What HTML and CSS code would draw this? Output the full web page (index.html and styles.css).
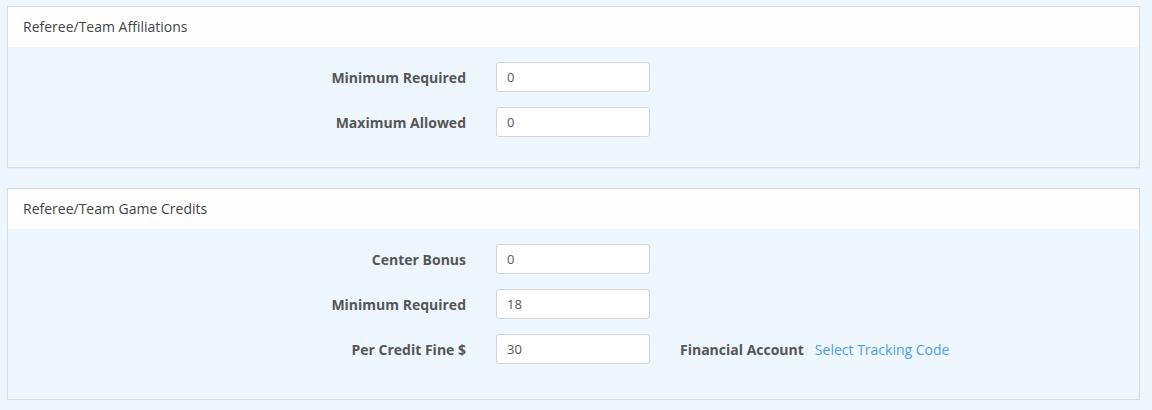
FILE: index.html
```html
<!DOCTYPE html>
<html>
<head>
<meta charset="utf-8">
<link rel="stylesheet" href="styles.css">
</head>
<body>
<div class="page">
  <section class="panel">
    <div class="panel-heading">Referee/Team Affiliations</div>
    <div class="panel-body">
      <div class="form-row">
        <label class="form-label">Minimum Required</label>
        <input class="form-input" type="text" value="0">
      </div>
      <div class="form-row">
        <label class="form-label">Maximum Allowed</label>
        <input class="form-input" type="text" value="0">
      </div>
    </div>
  </section>
  <section class="panel">
    <div class="panel-heading">Referee/Team Game Credits</div>
    <div class="panel-body panel-body-tall">
      <div class="form-row">
        <label class="form-label">Center Bonus</label>
        <input class="form-input" type="text" value="0">
      </div>
      <div class="form-row">
        <label class="form-label">Minimum Required</label>
        <input class="form-input" type="text" value="18">
      </div>
      <div class="form-row">
        <label class="form-label">Per Credit Fine $</label>
        <input class="form-input" type="text" value="30">
        <div class="extra">
          <span class="extra-label">Financial Account</span>
          <a class="link" href="#">Select Tracking Code</a>
        </div>
      </div>
    </div>
  </section>
</div>
</body>
</html>
```
FILE: styles.css
```css
html, body {
  margin: 0;
  padding: 0;
  background: #eff7fe;
}
body {
  font-family: "Open Sans", "Liberation Sans", sans-serif;
  font-size: 14px;
  color: #555;
}
.page {
  padding: 6px 12px 0 7px;
  display: flex;
  flex-direction: column;
  gap: 20px;
}
.panel {
  border: 1px solid #d9dcdf;
  background: #eff7fe;
  box-shadow: 0 1px 1px rgba(0,0,0,0.03);
}
.panel-heading {
  background: #fefefe;
  padding: 10px 15px;
  line-height: 20px;
  color: #444;
}
.panel-body {
  padding: 15px 15px 0 15px;
}
.panel-body-tall {
  padding-bottom: 5px;
}
.form-row {
  display: grid;
  grid-template-columns: 443px 154px auto;
  column-gap: 30px;
  align-items: center;
  margin-bottom: 15px;
  height: 30px;
}
.panel-body > .form-row:last-child {
  margin-bottom: 30px;
}
.form-label {
  text-align: right;
  font-weight: 700;
  color: #555;
}
.form-input {
  box-sizing: border-box;
  width: 154px;
  height: 30px;
  border: 1px solid #d2d4d6;
  border-radius: 3px;
  background: #fff;
  padding: 0 10px;
  font-family: "Open Sans", "Liberation Sans", sans-serif;
  font-size: 13px;
  color: #555;
  outline: none;
}
.extra {
  display: flex;
  align-items: center;
  gap: 11px;
}
.extra-label {
  font-weight: 700;
  color: #555;
}
.link {
  color: #4a9ee2;
  text-decoration: none;
}
```
